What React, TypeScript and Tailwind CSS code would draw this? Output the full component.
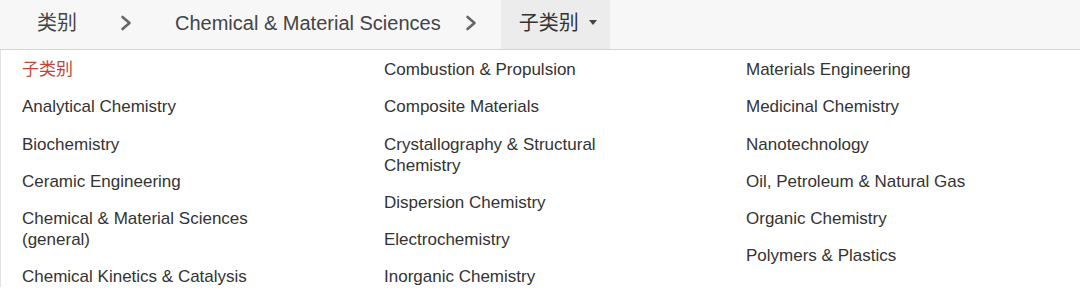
const columns: string[][] = [
  [
    '子类别',
    'Analytical Chemistry',
    'Biochemistry',
    'Ceramic Engineering',
    'Chemical & Material Sciences (general)',
    'Chemical Kinetics & Catalysis',
  ],
  [
    'Combustion & Propulsion',
    'Composite Materials',
    'Crystallography & Structural Chemistry',
    'Dispersion Chemistry',
    'Electrochemistry',
    'Inorganic Chemistry',
  ],
  [
    'Materials Engineering',
    'Medicinal Chemistry',
    'Nanotechnology',
    'Oil, Petroleum & Natural Gas',
    'Organic Chemistry',
    'Polymers & Plastics',
  ],
];

const font = { fontFamily: '"Liberation Sans", Arial, "Noto Sans CJK SC", sans-serif' };

const Chevron = () => (
  <svg width="12" height="16" viewBox="0 0 12 16" fill="none">
    <polyline
      points="2.5,2 9.5,8 2.5,14"
      stroke="#666"
      strokeWidth="2.6"
      strokeLinecap="round"
      strokeLinejoin="round"
    />
  </svg>
);

const App = () => {
  return (
    <div className="w-[1080px] h-[291px] overflow-hidden bg-white" style={font}>
      <div className="flex items-stretch h-[50px] bg-[#f7f7f8] border-b border-[#d3d3d3] text-[20px] text-[#444]">
        <div className="flex items-center pl-[37px] pb-[4px]">类别</div>
        <div className="flex items-center pl-[43px] pr-[43px] pb-[4px]">
          <Chevron />
        </div>
        <div className="flex items-center pb-[4px]">Chemical &amp; Material Sciences</div>
        <div className="flex items-center pl-[24px] pr-[24px] pb-[4px]">
          <Chevron />
        </div>
        <div className="flex items-center gap-[10px] bg-[#ececec] pl-[18px] pr-[13px] pb-[4px] text-[#333]">
          <span>子类别</span>
          <span className="w-0 h-0 border-l-[4px] border-r-[4px] border-t-[5px] border-l-transparent border-r-transparent border-t-[#444]" />
        </div>
      </div>
      <div className="grid grid-cols-[362px_362px_1fr] border-l border-[#e2e2e2] pt-[9px] text-[17px] leading-[21px] text-[#333]">
        {columns.map((col, i) => (
          <ul key={i} className="flex flex-col gap-[16.25px] pl-[21px] pr-[91px]">
            {col.map((item, j) => (
              <li key={item} className={i === 0 && j === 0 ? 'text-[#c0463a]' : ''}>
                {item}
              </li>
            ))}
          </ul>
        ))}
      </div>
    </div>
  );
};

export default App;
